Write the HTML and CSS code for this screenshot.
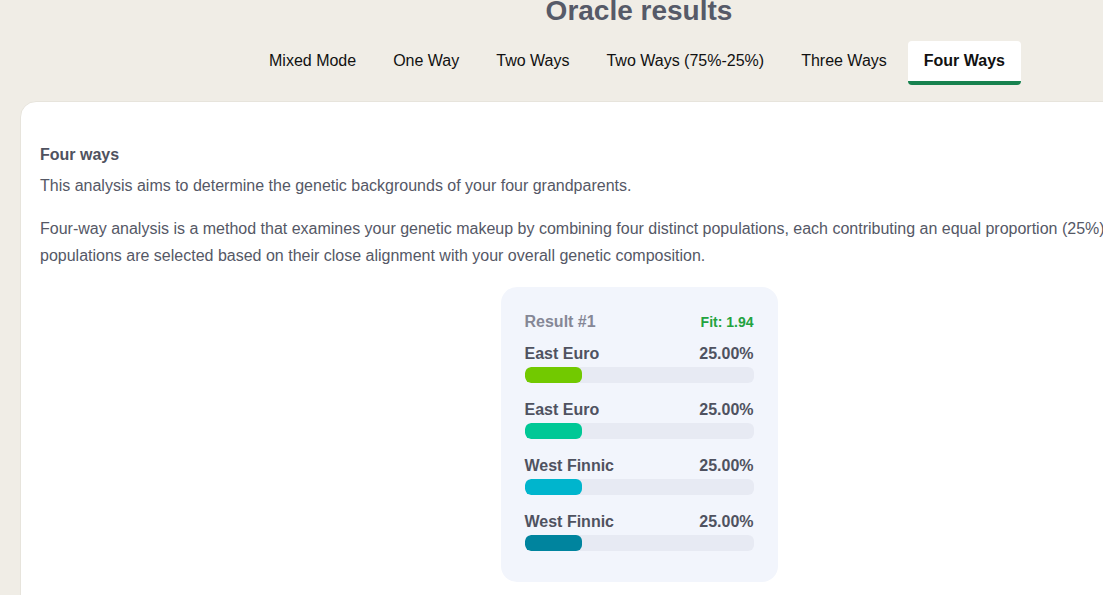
FILE: index.html
```html
<!DOCTYPE html>
<html lang="en">
<head>
<meta charset="utf-8">
<title>Oracle results</title>
<link rel="stylesheet" href="styles.css">
</head>
<body>
<div class="page">
  <h1 class="title">Oracle results</h1>
  <nav class="tabs">
    <span class="tab">Mixed Mode</span>
    <span class="tab">One Way</span>
    <span class="tab">Two Ways</span>
    <span class="tab">Two Ways (75%-25%)</span>
    <span class="tab">Three Ways</span>
    <span class="tab active">Four Ways</span>
  </nav>
  <section class="card">
    <h2 class="heading">Four ways</h2>
    <p class="text">This analysis aims to determine the genetic backgrounds of your four grandparents.</p>
    <p class="text wide">Four-way analysis is a method that examines your genetic makeup by combining four distinct populations, each contributing an equal proportion (25%) to your ancestry. These populations are selected based on their close alignment with your overall genetic composition.</p>
    <div class="result">
      <div class="result-head">
        <span class="result-title">Result #1</span>
        <span class="fit">Fit: 1.94</span>
      </div>
      <div class="row">
        <div class="row-label"><span>East Euro</span><span>25.00%</span></div>
        <div class="bar"><div class="fill c1" style="width:25%"></div></div>
      </div>
      <div class="row">
        <div class="row-label"><span>East Euro</span><span>25.00%</span></div>
        <div class="bar"><div class="fill c2" style="width:25%"></div></div>
      </div>
      <div class="row">
        <div class="row-label"><span>West Finnic</span><span>25.00%</span></div>
        <div class="bar"><div class="fill c3" style="width:25%"></div></div>
      </div>
      <div class="row">
        <div class="row-label"><span>West Finnic</span><span>25.00%</span></div>
        <div class="bar"><div class="fill c4" style="width:25%"></div></div>
      </div>
    </div>
  </section>
</div>
</body>
</html>
```
FILE: styles.css
```css
html, body {
  margin: 0;
  padding: 0;
  background: #f0ede6;
  overflow: hidden;
}
body {
  font-family: "Liberation Sans", Arial, sans-serif;
  color: #4f5260;
}
.page {
  width: 1238px;
  margin-left: 20px;
}
.title {
  margin: -3px 0 0;
  font-size: 28px;
  line-height: 28px;
  font-weight: 700;
  color: #565a68;
  text-align: center;
}
.tabs {
  display: flex;
  justify-content: center;
  gap: 5px;
  margin-top: 16px;
  padding-right: 4px;
}
.tab {
  display: flex;
  align-items: center;
  height: 40px;
  padding: 0 16px;
  border-bottom: 4px solid transparent;
  font-size: 16px;
  color: #111;
  border-radius: 4px;
}
.tab.active {
  background: #fff;
  font-weight: 700;
  border-bottom-color: #17824f;
}
.card {
  margin-top: 16px;
  background: #fff;
  border: 1px solid #e7e4dc;
  border-radius: 16px;
  padding: 41px 19px 14px;
  height: 600px;
}
.heading {
  margin: 0 0 5px;
  font-size: 16px;
  line-height: 24px;
  font-weight: 700;
  color: #4f5260;
}
.text {
  margin: 0 0 16px;
  font-size: 16px;
  line-height: 27px;
  color: #555866;
}
.text.wide {
  margin-right: -120px;
}
.result {
  width: 229px;
  margin: 18px auto 0;
  background: #f2f5fc;
  border-radius: 16px;
  padding: 24px 24px 14px;
}
.result-head {
  display: flex;
  justify-content: space-between;
  align-items: center;
  height: 22px;
  margin-bottom: 11px;
}
.result-title {
  font-size: 16px;
  font-weight: 700;
  color: #858796;
}
.fit {
  font-size: 14px;
  font-weight: 700;
  color: #22a33f;
}
.row {
  margin-bottom: 17px;
}
.row-label {
  display: flex;
  justify-content: space-between;
  height: 20px;
  line-height: 20px;
  font-size: 16px;
  font-weight: 700;
  color: #4f5260;
  margin-bottom: 3px;
}
.bar {
  height: 16px;
  background: #e7eaf3;
  border-radius: 6px;
  overflow: hidden;
}
.fill {
  height: 100%;
  border-radius: 6px;
}
.c1 { background: #72c900; }
.c2 { background: #00c896; }
.c3 { background: #00b5cd; }
.c4 { background: #00849e; }
```
